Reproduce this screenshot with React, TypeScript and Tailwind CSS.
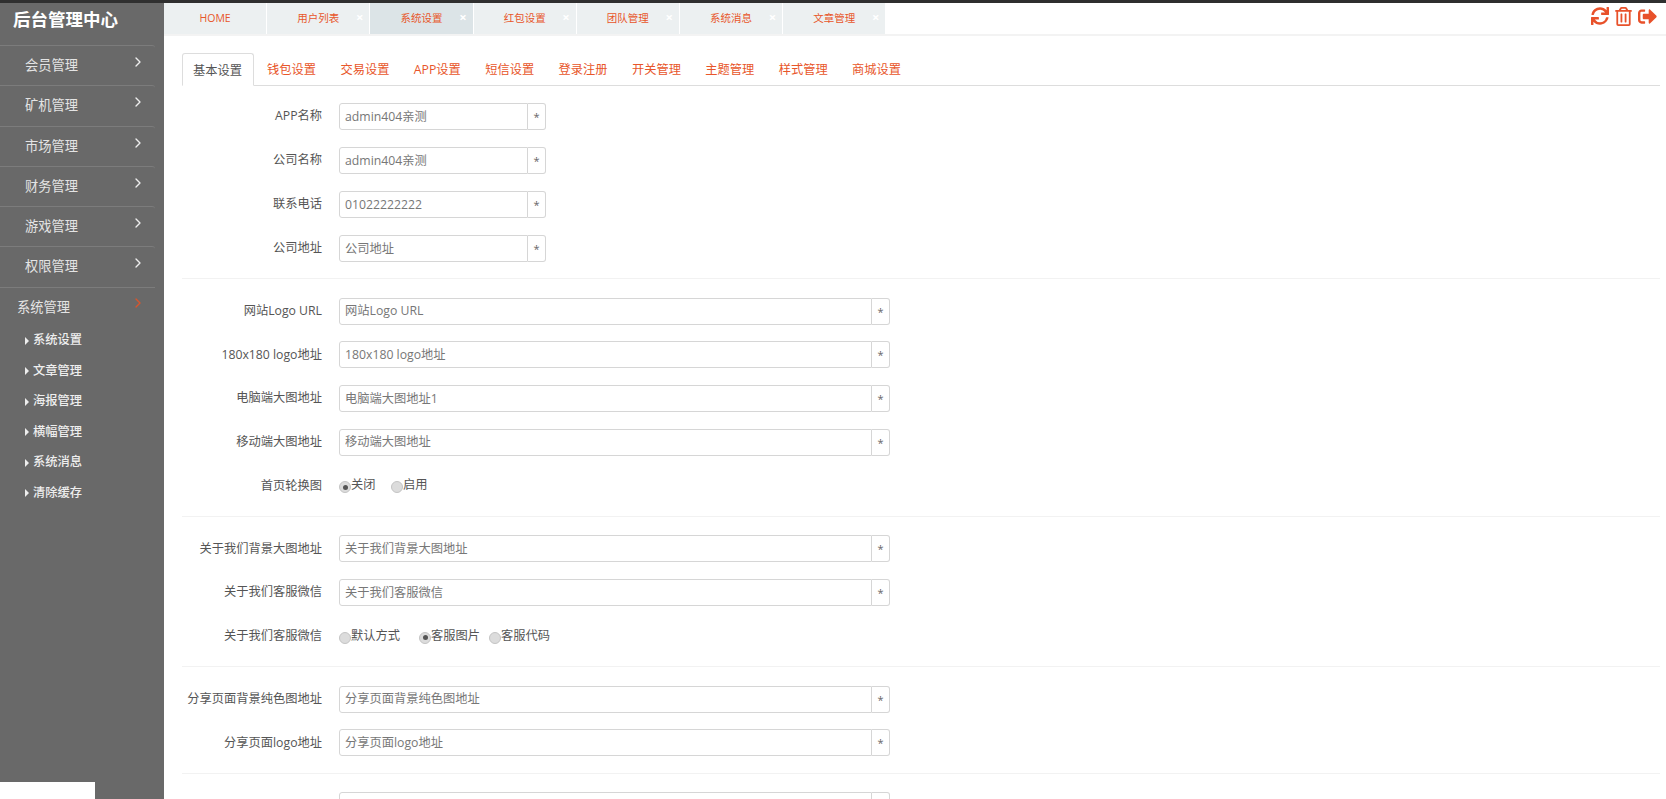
import { ChevronRight } from "lucide-react";
import { FaRegTrashAlt, FaSignOutAlt, FaSync } from "react-icons/fa";

const font = "font-['Open_Sans','Noto_Sans_CJK_SC',sans-serif]";

const menus = ["会员管理", "矿机管理", "市场管理", "财务管理", "游戏管理", "权限管理"];
const subMenus = ["系统设置", "文章管理", "海报管理", "横幅管理", "系统消息", "清除缓存"];
const pageTabs = ["用户列表", "系统设置", "红包设置", "团队管理", "系统消息", "文章管理"];
const navTabs = ["钱包设置", "交易设置", "APP设置", "短信设置", "登录注册", "开关管理", "主题管理", "样式管理", "商城设置"];

function Sidebar() {
  return (
    <aside className="w-[164px] shrink-0 bg-[#696969] relative">
      <div className="h-[42px] pl-[13px] pt-[4px] text-[17.5px] leading-[24px] font-bold text-white">后台管理中心</div>
      {menus.map((m) => (
        <div key={m} className="w-[155px] h-[40.3px] border-t border-[#7c7c7c] rounded-tr-[3px] flex pl-[25px] pr-[9px] justify-between">
          <span className="text-[13.25px] leading-[38px] text-[#e4e4e4]">{m}</span>
          <ChevronRight className="w-[16px] h-[16px] mt-[8px] text-[#eeeeee]" strokeWidth={2} />
        </div>
      ))}
      <div className="w-[155px] h-[38.5px] border-t border-[#7c7c7c] flex pl-[17px] pr-[9px] justify-between">
        <span className="text-[13.25px] leading-[38px] text-[#e4e4e4]">系统管理</span>
        <ChevronRight className="w-[16px] h-[16px] mt-[7px] text-[#d9552c]" strokeWidth={2} />
      </div>
      <ul>
        {subMenus.map((s) => (
          <li key={s} className="h-[30.5px] flex items-center pl-[25px] text-[12.25px] font-medium text-[#eeeeee]">
            <span className="w-0 h-0 mr-[4px] border-y-[4px] border-y-transparent border-l-[4px] border-l-[#eeeeee]" />
            {s}
          </li>
        ))}
      </ul>
      <div className="absolute left-0 bottom-0 w-[95px] h-[17px] bg-white" />
    </aside>
  );
}

function PageTabs() {
  return (
    <div className="h-[33px] shrink-0 flex border-b-2 border-[#f3f3f3]">
      <div className="w-[103.2px] h-[31px] bg-[#ecf0f1] border-r border-white text-center text-[10.5px] leading-[31px] text-[#e8562a]">HOME</div>
      {pageTabs.map((t, i) => (
        <div
          key={t}
          className={
            i === 1
              ? "w-[103.2px] h-[31px] relative bg-[#dce4e7] border-r border-white text-center text-[10.5px] leading-[31px] text-[#e8562a]"
              : "w-[103.2px] h-[31px] relative bg-[#ecf0f1] border-r border-white text-center text-[10.5px] leading-[31px] text-[#e8562a]"
          }
        >
          {t}
          <span className="absolute top-[8px] right-[6px] text-[13px] leading-[13px] font-bold text-white">×</span>
        </div>
      ))}
      <div className="flex-1 flex justify-end items-start gap-[6px] pt-[4px] pr-[9px] text-[#e8512a]">
        <FaSync className="w-[18px] h-[18px]" />
        <FaRegTrashAlt className="w-[17px] h-[19px]" />
        <FaSignOutAlt className="w-[19px] h-[19px]" />
      </div>
    </div>
  );
}

function NavTabs() {
  return (
    <div className="flex h-[33px] border-b border-[#dddddd] mt-[17px]">
      <div className="w-[72px] h-[33px] shrink-0 px-[10px] whitespace-nowrap bg-white border border-b-white border-[#dddddd] rounded-t-[3px] text-[12.25px] leading-[33px] text-[#555555]">基本设置</div>
      <div className="flex gap-[24.4px] pl-[13px]">
        {navTabs.map((t) => (
          <span key={t} className="text-[12.25px] leading-[33px] text-[#e8562a]">{t}</span>
        ))}
      </div>
    </div>
  );
}

function Label({ text }: { text: string }) {
  return <label className="w-[140px] shrink-0 text-right text-[12.25px] text-[#555555]">{text}</label>;
}

function Field({ label, value, short }: { label: string; value: string; short?: boolean }) {
  return (
    <div className="flex items-center h-[27px] gap-[17px]">
      <Label text={label} />
      <div className={short ? "flex w-[207px] h-[27px]" : "flex w-[551px] h-[27px]"}>
        <input
          readOnly
          value={value}
          className="flex-1 min-w-0 px-[5px] pt-[1px] border border-[#d6d6d6] rounded-l-[3px] text-[12.25px] text-[#777777] outline-none"
        />
        <span className="w-[18px] border border-l-0 border-[#d6d6d6] rounded-r-[3px] text-center text-[11px] leading-[25px] text-[#666666]">*</span>
      </div>
    </div>
  );
}

function Radio({ text, checked, gap }: { text: string; checked?: boolean; gap: string }) {
  return (
    <span className={gap + " flex items-start"}>
      <span className="w-[12px] h-[12px] mt-[3px] rounded-full border border-[#c4c4c4] bg-[#dcdcdc] flex items-center justify-center">
        {checked && <span className="w-[5px] h-[5px] rounded-full bg-[#555555]" />}
      </span>
      <span className="text-[12.25px] leading-[14px] text-[#555555]">{text}</span>
    </span>
  );
}

function RadioRow({ label, children }: { label: string; children: React.ReactNode }) {
  return (
    <div className="flex items-center h-[27px] gap-[17px]">
      <Label text={label} />
      <div className="flex">{children}</div>
    </div>
  );
}

function Section({ children, first }: { children: React.ReactNode; first?: boolean }) {
  return (
    <section className={first ? "flex flex-col gap-[17px] pt-[17px] pb-[16px] border-b border-[#f2f2f2]" : "flex flex-col gap-[16.7px] pt-[18.5px] pb-[16.5px] border-b border-[#f2f2f2]"}>
      {children}
    </section>
  );
}

export default function App() {
  return (
    <div className={font + " w-[1666px] h-[799px] overflow-hidden flex flex-col bg-white"}>
      <div className="h-[3px] shrink-0 bg-[#2f2f2f]" />
      <div className="flex flex-1 min-h-0">
        <Sidebar />
        <main className="flex-1 min-w-0 flex flex-col">
          <PageTabs />
          <div className="pl-[18px] pr-[6px]">
            <NavTabs />
            <Section first>
              <Field short label="APP名称" value="admin404亲测" />
              <Field short label="公司名称" value="admin404亲测" />
              <Field short label="联系电话" value="01022222222" />
              <Field short label="公司地址" value="公司地址" />
            </Section>
            <Section>
              <Field label="网站Logo URL" value="网站Logo URL" />
              <Field label="180x180 logo地址" value="180x180 logo地址" />
              <Field label="电脑端大图地址" value="电脑端大图地址1" />
              <Field label="移动端大图地址" value="移动端大图地址" />
              <RadioRow label="首页轮换图">
                <Radio checked text="关闭" gap="w-[52px]" />
                <Radio text="启用" gap="w-[40px]" />
              </RadioRow>
            </Section>
            <Section>
              <Field label="关于我们背景大图地址" value="关于我们背景大图地址" />
              <Field label="关于我们客服微信" value="关于我们客服微信" />
              <RadioRow label="关于我们客服微信">
                <Radio text="默认方式" gap="w-[80px]" />
                <Radio checked text="客服图片" gap="w-[70px]" />
                <Radio text="客服代码" gap="w-[62px]" />
              </RadioRow>
            </Section>
            <Section>
              <Field label="分享页面背景纯色图地址" value="分享页面背景纯色图地址" />
              <Field label="分享页面logo地址" value="分享页面logo地址" />
            </Section>
            <Section>
              <Field label="" value="" />
            </Section>
          </div>
        </main>
      </div>
    </div>
  );
}
